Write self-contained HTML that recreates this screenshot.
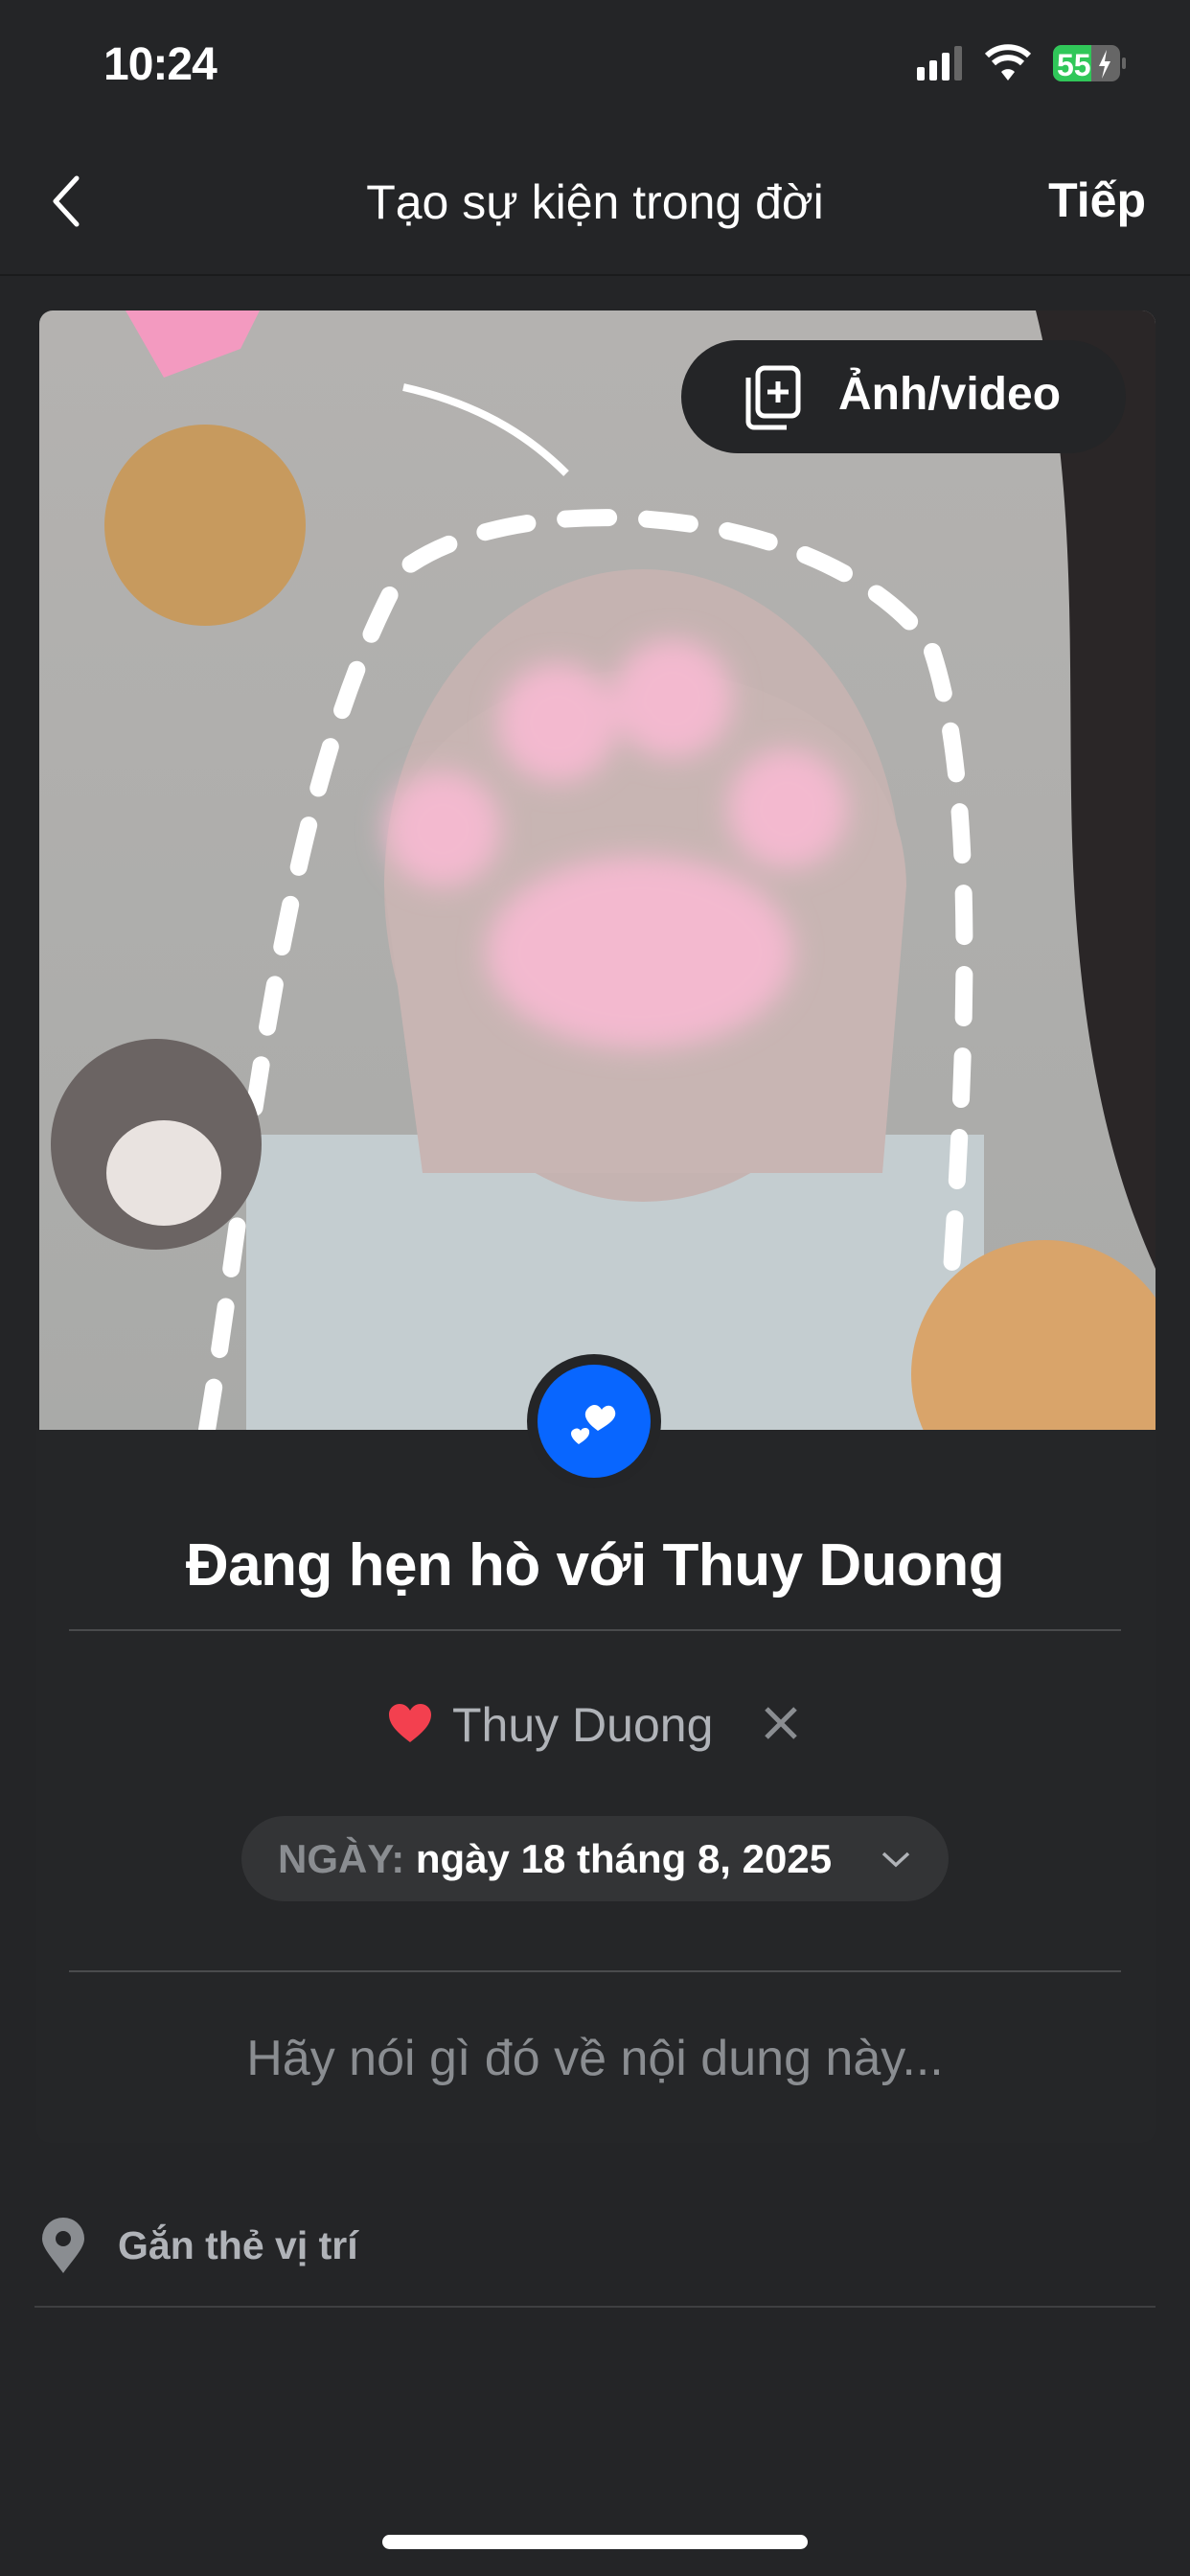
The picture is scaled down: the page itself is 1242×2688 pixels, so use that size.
<!DOCTYPE html>
<html><head><meta charset="utf-8"><style>
*{margin:0;padding:0;box-sizing:border-box}
body{width:1242px;height:2688px;background:#242527;font-family:"Liberation Sans",sans-serif;color:#e4e6eb;position:relative;overflow:hidden}
.a{position:absolute}
</style></head><body>
<div class="a" style="left:108px;top:40px;font-size:48px;font-weight:bold;color:#fff;letter-spacing:-1px">10:24</div>
<svg class="a" style="left:955px;top:44px" width="230" height="50" viewBox="0 0 230 50">
<rect x="2" y="26" width="8" height="14" rx="2" fill="#fff"/><rect x="15" y="19" width="8" height="21" rx="2" fill="#fff"/><rect x="28" y="11" width="8" height="29" rx="2" fill="#fff"/><rect x="41" y="4" width="8" height="36" rx="2" fill="#666"/>
<path d="M75 14 a32 32 0 0 1 44 0" stroke="#fff" stroke-width="6" fill="none"/><path d="M82 22 a22 22 0 0 1 30 0" stroke="#fff" stroke-width="6" fill="none"/><path d="M97 40 l-7 -9 a10 10 0 0 1 14 0z" fill="#fff"/>
<rect x="144" y="3" width="70" height="38" rx="9" fill="#666"/><rect x="144" y="3" width="40" height="38" rx="9" fill="#30c759"/><rect x="176" y="3" width="8" height="38" fill="#30c759"/>
<text x="148" y="35" font-size="32" font-weight="bold" fill="#fff" font-family="Liberation Sans">55</text>
<path d="M200 8 l-8 17 h6 l-3 13 l9 -18 h-6z" fill="#fff"/><rect x="216" y="16" width="4" height="12" rx="2" fill="#666"/>
</svg>
<svg class="a" style="left:50px;top:182px" width="40" height="56"><path d="M30 4 L8 28 L30 52" stroke="#fff" stroke-width="5" fill="none" stroke-linecap="round" stroke-linejoin="round"/></svg>
<div class="a" style="left:0;width:1242px;top:182px;text-align:center;font-size:50px;color:#fff">Tạo sự kiện trong đời</div>
<div class="a" style="right:46px;top:180px;font-size:50px;font-weight:bold;color:#fff">Tiếp</div>
<div class="a" style="left:0;top:286px;width:1242px;height:2px;background:#1a1b1c"></div>
<div class="a" style="left:38px;top:1490px;width:1168px;height:746px;background:#252628;border-radius:0 0 14px 14px"></div>
<svg class="a" style="left:41px;top:324px;border-radius:14px 14px 0 0" width="1165" height="1168" viewBox="0 0 1165 1168">
<defs><linearGradient id="g" x1="0" y1="0" x2="0" y2="1"><stop offset="0" stop-color="#b4b2b0"/><stop offset="1" stop-color="#a9aaa8"/></linearGradient>
<filter id="b"><feGaussianBlur stdDeviation="14"/></filter></defs>
<rect width="1165" height="1168" fill="url(#g)"/>
<path d="M1040 0 H1165 V1000 C1120 900 1090 780 1080 600 C1070 420 1090 200 1040 0Z" fill="#2a2627"/>
<rect x="216" y="860" width="770" height="308" fill="#c4cdd0"/>
<ellipse cx="630" cy="600" rx="270" ry="330" fill="#c5b3b1"/>
<path d="M360 600 C360 300 900 300 905 600 L880 900 L400 900Z" fill="#c8b5b3"/>
<g filter="url(#b)" fill="#f3b9cf"><circle cx="421" cy="541" r="60"/><circle cx="541" cy="430" r="62"/><circle cx="661" cy="405" r="62"/><circle cx="781" cy="520" r="62"/><ellipse cx="627" cy="670" rx="160" ry="100"/></g>
<path d="M175 1168 C220 900 250 500 380 270 C500 180 820 200 930 350 C990 520 960 900 940 1168" stroke="#fff" stroke-width="18" fill="none" stroke-dasharray="45 40" stroke-linecap="round"/>
<path d="M380 80 C470 100 520 140 550 170" stroke="#fff" stroke-width="8" fill="none"/>
<circle cx="173" cy="224" r="105" fill="#c79a5e"/>
<circle cx="122" cy="870" r="110" fill="#6b6463"/><ellipse cx="130" cy="900" rx="60" ry="55" fill="#e9e3e0"/>
<circle cx="1050" cy="1110" r="140" fill="#d9a46a"/>
<path d="M90 0 L130 70 L210 40 L230 0Z" fill="#f39ac0"/>
</svg>
<div class="a" style="left:711px;top:355px;width:464px;height:118px;border-radius:59px;background:#242527"></div>
<svg class="a" style="left:776px;top:380px" width="62" height="70" viewBox="0 0 62 70"><rect x="15" y="4" width="42" height="50" rx="7" stroke="#fff" stroke-width="5" fill="none"/><path d="M5 14 V60 a6 6 0 0 0 6 6 H45" stroke="#fff" stroke-width="5" fill="none"/><path d="M36 18 V40 M25 29 H47" stroke="#fff" stroke-width="5"/></svg>
<div class="a" style="left:875px;top:384px;font-size:48px;font-weight:bold;color:#fff">Ảnh/video</div>
<div class="a" style="left:550px;top:1413px;width:140px;height:140px;border-radius:50%;background:#242527"></div>
<div class="a" style="left:561px;top:1424px;width:118px;height:118px;border-radius:50%;background:#0866ff"></div>
<svg class="a" style="left:590px;top:1455px" width="60" height="56" viewBox="0 0 60 56"><path d="M34 38 C20 28 18 20 24 14 C30 8 36 12 38 16 C42 10 50 10 52 18 C54 26 44 32 34 38Z" fill="#fff"/><path d="M14 52 C6 46 4 40 8 37 C12 34 15 36 16 38 C18 34 24 34 25 38 C26 44 20 48 14 52Z" fill="#fff"/></svg>
<div class="a" style="left:0;width:1242px;top:1598px;text-align:center;font-size:62px;font-weight:bold;color:#fff;letter-spacing:-0.5px">Đang hẹn hò với Thuy Duong</div>
<div class="a" style="left:72px;top:1700px;width:1098px;height:2px;background:#4a4b4d"></div>
<svg class="a" style="left:404px;top:1776px" width="48" height="44" viewBox="0 0 48 44"><path d="M24 42 C8 30 2 22 2 13 C2 6 8 2 13 2 C18 2 22 5 24 9 C26 5 30 2 35 2 C40 2 46 6 46 13 C46 22 40 30 24 42Z" fill="#f3404f"/></svg>
<div class="a" style="left:472px;top:1771px;font-size:50px;color:#b0b3b8">Thuy Duong</div>
<svg class="a" style="left:796px;top:1779px" width="38" height="38"><path d="M4 4 L34 34 M34 4 L4 34" stroke="#8a8d91" stroke-width="5"/></svg>
<div class="a" style="left:252px;top:1895px;width:738px;height:89px;border-radius:45px;background:#333436"></div>
<div class="a" style="left:290px;top:1916px;font-size:42px;white-space:nowrap"><span style="color:#8a8d91;font-weight:bold">NGÀY:</span> <b style="color:#fff">ngày 18 tháng 8, 2025</b></div>
<svg class="a" style="left:918px;top:1928px" width="34" height="24"><path d="M4 6 L17 18 L30 6" stroke="#b0b3b8" stroke-width="3.5" fill="none"/></svg>
<div class="a" style="left:72px;top:2056px;width:1098px;height:2px;background:#4a4b4d"></div>
<div class="a" style="left:0;width:1242px;top:2118px;text-align:center;font-size:52px;color:#8a8d91">Hãy nói gì đó về nội dung này...</div>
<svg class="a" style="left:42px;top:2314px" width="48" height="60" viewBox="0 0 48 60"><path d="M24 58 C14 44 2 32 2 22 A22 22 0 0 1 46 22 C46 32 34 44 24 58Z" fill="#8a8d91"/><circle cx="24" cy="22" r="8" fill="#242527"/></svg>
<div class="a" style="left:123px;top:2320px;font-size:41px;font-weight:bold;color:#b0b3b8">Gắn thẻ vị trí</div>
<div class="a" style="left:36px;top:2406px;width:1170px;height:2px;background:#3e3f41"></div>
<div class="a" style="left:399px;top:2645px;width:444px;height:15px;border-radius:8px;background:#fff"></div>
</body></html>
